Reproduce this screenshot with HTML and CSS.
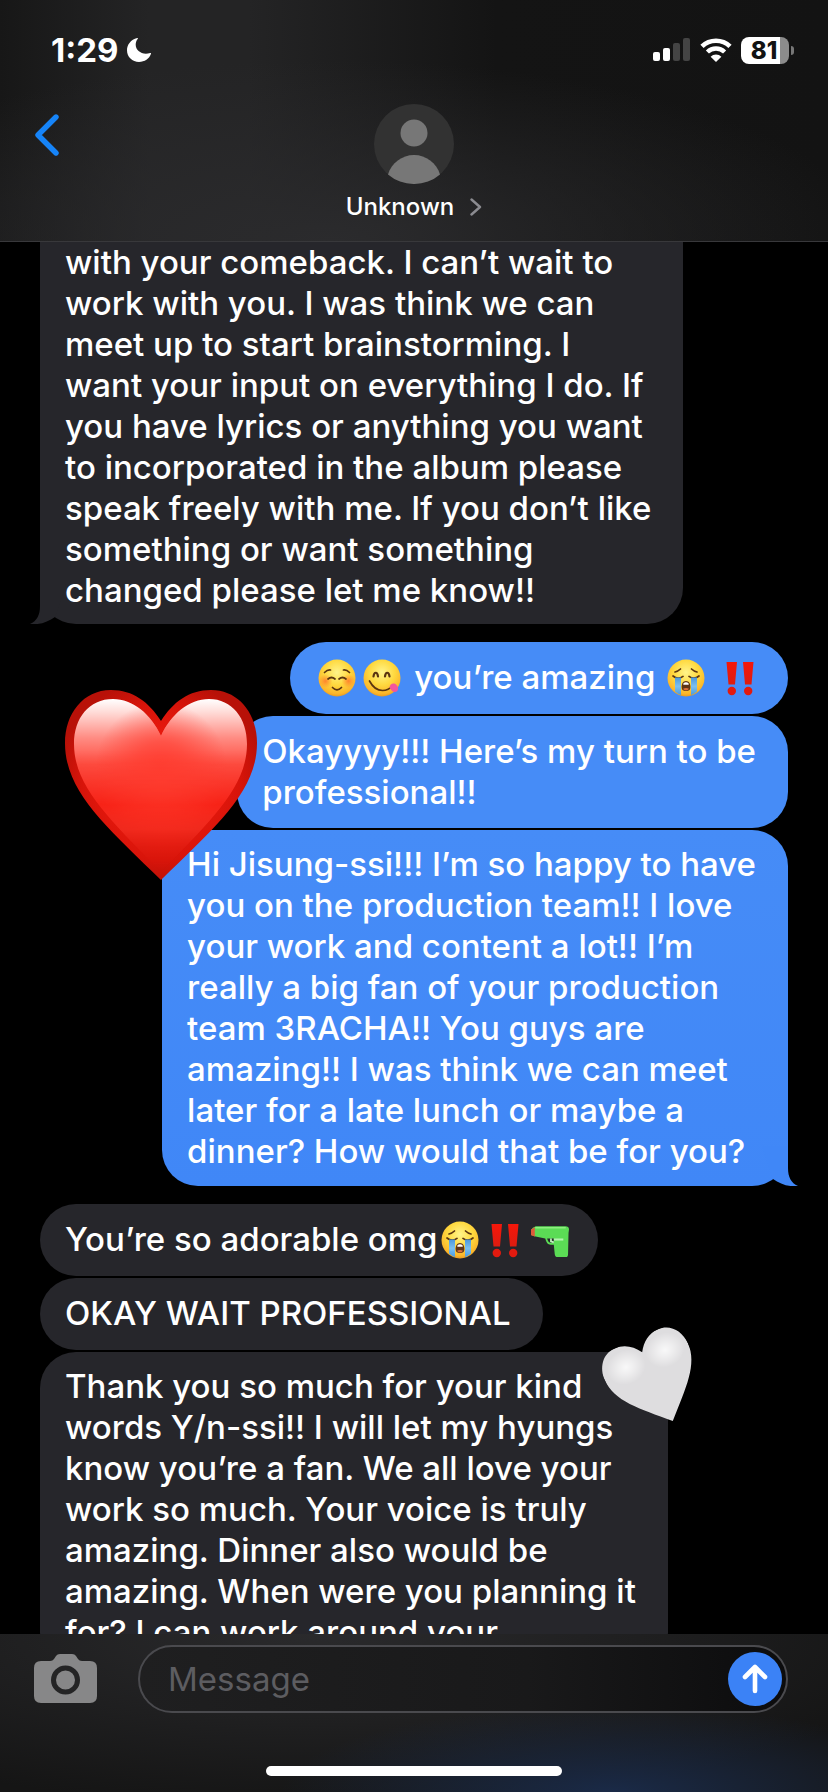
FILE: index.html
```html
<!DOCTYPE html>
<html lang="en">
<head>
<meta charset="utf-8">
<meta name="viewport" content="width=device-width, initial-scale=1">
<title>Messages</title>
<link rel="stylesheet" href="styles.css">
</head>
<body>
<svg class="defs" aria-hidden="true">
  <defs>
    <radialGradient id="face" cx=".5" cy=".35" r=".68">
      <stop offset="0" stop-color="#fff48a"/><stop offset=".5" stop-color="#ffd93f"/><stop offset=".85" stop-color="#fbb52a"/><stop offset="1" stop-color="#e0901c"/>
    </radialGradient>
    <radialGradient id="blush"><stop offset="0" stop-color="#ff6a2a" stop-opacity=".75"/><stop offset="1" stop-color="#ff7a2a" stop-opacity="0"/></radialGradient>
    <linearGradient id="tear" x1="0" y1="0" x2="0" y2="1"><stop offset="0" stop-color="#4a97dc"/><stop offset=".5" stop-color="#7cc0ee"/><stop offset="1" stop-color="#4a9be0"/></linearGradient>
    <linearGradient id="bang" x1="0" y1="0" x2="0" y2="1"><stop offset="0" stop-color="#f5170a"/><stop offset="1" stop-color="#dd1c10"/></linearGradient>
    <radialGradient id="red" cx="96" cy="92" r="104" gradientUnits="userSpaceOnUse">
      <stop offset="0" stop-color="#f5200f"/><stop offset=".45" stop-color="#e8190d"/><stop offset=".75" stop-color="#d8140a"/><stop offset="1" stop-color="#b81108"/>
    </radialGradient>
    <linearGradient id="gloss" x1="0" y1="9" x2="0" y2="172" gradientUnits="userSpaceOnUse">
      <stop offset="0" stop-color="#fff"/><stop offset=".08" stop-color="#ffdcd8"/><stop offset=".24" stop-color="#ff8b82"/><stop offset=".4" stop-color="#ff4f43"/><stop offset=".65" stop-color="#ff281c"/><stop offset=".8" stop-color="#ff3d30"/><stop offset="1" stop-color="#e01c10"/>
    </linearGradient>
    <radialGradient id="warm" cx="96" cy="78" r="66" gradientUnits="userSpaceOnUse">
      <stop offset="0" stop-color="#ff4034"/><stop offset=".4" stop-color="#ff4034" stop-opacity=".7"/><stop offset="1" stop-color="#ff4034" stop-opacity="0"/>
    </radialGradient>
    <linearGradient id="glossfade" x1="0" y1="60" x2="0" y2="182" gradientUnits="userSpaceOnUse">
      <stop offset="0" stop-color="#fff"/><stop offset=".5" stop-color="#fff" stop-opacity=".7"/><stop offset="1" stop-color="#fff" stop-opacity="0"/>
    </linearGradient>
    <mask id="glossmask"><rect width="192" height="190" fill="url(#glossfade)"/></mask>
    <radialGradient id="shine"><stop offset="0" stop-color="#fff" stop-opacity=".8"/><stop offset=".4" stop-color="#fff" stop-opacity=".5"/><stop offset="1" stop-color="#fff" stop-opacity="0"/></radialGradient>
    <symbol id="sob" viewBox="0 0 38 38">
      <circle cx="19" cy="19" r="18.500" fill="url(#face)"/>
      <path d="M6 17c3 2.600 7 2.600 10 .4M32 17c-3 2.600-7 2.600-10 .4M8 13c2-.4 4-1.600 5.500-3M30 13c-2-.4-4-1.600-5.500-3" fill="none" stroke="#5b3510" stroke-width="1.700" stroke-linecap="round"/>
      <path d="M8 18.500h6V36Q10.500 34.800 8 32.500ZM24 18.500h6v14Q27.500 34.800 24 36Z" fill="url(#tear)"/>
      <path d="M19 22c3 0 4.400 2.800 4.400 6s-1.800 4-4.400 4-4.400-.8-4.400-4 1.400-6 4.400-6Z" fill="#603516"/>
      <path d="M16.300 24.600q2.700-2.600 5.400 0v1.200h-5.400Z" fill="#fff"/>
      <path d="M16 29.800q3-1.800 6 0-1 1.600-3 1.600t-3-1.600Z" fill="#e0703a"/>
    </symbol>
    <symbol id="bangs" viewBox="0 0 38 38">
      <path d="M5.500 3h10.500l-2 22.500h-6.500ZM22 3h10.500l-2 22.500H24Z" fill="url(#bang)"/>
      <circle cx="10.800" cy="32" r="4.200" fill="#e21a0f"/><circle cx="27.200" cy="32" r="4.200" fill="#e21a0f"/>
    </symbol>
  </defs>
</svg>

<div class="phone">
  <header class="top">
    <div class="status">
      <div class="clock">
        <time>1:29</time>
        <svg width="24" height="24" viewBox="0 0 24 24" role="img" aria-label="Do not disturb"><path d="M10.200 0C3.800 1.600 0 6.700 0 12.300 0 19 5.300 24 12 24c5.600 0 10.300-3.200 12-8.200.2-.6-.3-1-.9-.8C15.200 17.500 8.500 12.500 8.700 6.500c0-2.200.8-4.200 2-5.500.5-.6.1-1.100-.5-1Z" fill="#fff"/></svg>
      </div>
      <div class="indicators">
        <svg width="38" height="24" viewBox="0 0 38 24" role="img" aria-label="Signal, two bars of four">
          <rect y="14" width="7" height="9" rx="2" fill="#fff"/><rect x="10" y="10" width="7" height="13" rx="2" fill="#fff"/><rect x="20" y="5" width="7" height="18" rx="2" fill="#444"/><rect x="30" width="7" height="23" rx="2" fill="#444"/>
        </svg>
        <svg width="32" height="24" viewBox="0 0 32 24" role="img" aria-label="Wi-Fi">
          <path d="M2 8.400a20 20 0 0 1 28 0" fill="none" stroke="#fff" stroke-width="4.600"/>
          <path d="M7.400 14a12.300 12.300 0 0 1 17.200 0" fill="none" stroke="#fff" stroke-width="4.400"/>
          <path d="M16 24l-5.400-5.200a7.600 7.600 0 0 1 10.800 0Z" fill="#fff"/>
        </svg>
        <div class="battery"><span class="battery-cell">81</span><span class="battery-nub"></span></div>
      </div>
    </div>
    <nav class="nav">
      <button class="back" type="button" aria-label="Back">
        <svg width="26" height="42" viewBox="0 0 26 42"><path d="M22 3 4 21l18 18" fill="none" stroke="#1684f8" stroke-width="5.400" stroke-linecap="round" stroke-linejoin="round"/></svg>
      </button>
      <button class="contact" type="button">
        <svg class="avatar" width="80" height="80" viewBox="0 0 80 80" aria-hidden="true">
          <circle cx="40" cy="40" r="40" fill="#323232"/><circle cx="40" cy="29" r="13.500" fill="#777"/>
          <path d="M14 70.400C17.500 59 28 51 40 51s22.500 8 26 19.400A40 40 0 0 1 14 70.400Z" fill="#777"/>
        </svg>
        <span class="name">Unknown<svg width="12" height="18" viewBox="0 0 12 18" aria-hidden="true"><path d="M1.500 1.500 10 9l-8.500 7.500" fill="none" stroke="#8b8b90" stroke-width="2.400" stroke-linecap="round" stroke-linejoin="round"/></svg></span>
      </button>
    </nav>
  </header>

  <main class="chat">
    <section class="group received">
      <p class="bubble continued">with your comeback. I can’t wait to<br>work with you. I was think we can<br>meet up to start brainstorming. I<br>want your input on everything I do. If<br>you have lyrics or anything you want<br>to incorporated in the album please<br>speak freely with me. If you don’t like<br>something or want something<br>changed please let me know!!
        <svg class="tail" width="36" height="40" viewBox="0 0 36 40" aria-hidden="true"><path d="M10 0v22c0 9-3 15-10 18 10 1 18-2 25-7L36 0Z" fill="#26262b"/></svg></p>
    </section>
    <section class="group sent">
      <p class="bubble emoji-end"><span class="emoji"><svg viewBox="0 0 38 38" role="img" aria-label="Smiling face"><circle cx="19" cy="19" r="18.500" fill="url(#face)"/><circle cx="7.500" cy="22" r="7" fill="url(#blush)"/><circle cx="30.500" cy="22" r="7" fill="url(#blush)"/><path d="M10 20q3.500-3 7 0M21 20q3.500-3 7 0M14.500 28.500q4.500 4.500 9 0M6.500 13.500q3-3 6-2.500M31.500 13.500q-3-3-6-2.500" fill="none" stroke="#5b3510" stroke-width="1.700" stroke-linecap="round"/></svg></span><span class="emoji"><svg viewBox="0 0 38 38" role="img" aria-label="Face savouring food"><circle cx="19" cy="19" r="18.500" fill="url(#face)"/><path d="M10.500 17.500c.5-5 4-5 4.500 0M22 17.500c.5-5 4-5 4.500 0" fill="none" stroke="#5b3510" stroke-width="2.200" stroke-linecap="round"/><path d="M6.500 22q5 9.500 13 9.500 6 0 10.500-5" fill="none" stroke="#5b3510" stroke-width="1.700" stroke-linecap="round"/><path d="M26.500 28.500c.5-3.500 4-5.500 7-2.500 3 3 1.500 7-1.500 7-2.500 0-4-2-5.500-4.500Z" fill="#f3569c"/></svg></span> you’re amazing <span class="emoji"><svg role="img" aria-label="Loudly crying face"><use href="#sob"/></svg></span> <span class="emoji"><svg role="img" aria-label="Double exclamation mark"><use href="#bangs"/></svg></span></p>
      <p class="bubble">Okayyyy!!! Here’s my turn to be<br>professional!!
        <svg class="heart-red" width="192" height="190" viewBox="0 0 192 190" role="img" aria-label="Red heart">
          <path d="M96 31C84 12 68 0 46 0 18 0 0 24 0 53c0 49 42 84 96 137 54-53 96-88 96-137C192 24 174 0 146 0c-22 0-38 12-50 31Z" fill="url(#red)"/>
          <g mask="url(#glossmask)">
            <path d="M96 46C86 24 68 9 48 9 24 9 9 28 9 54c0 44 39 78 87 128 48-50 86-84 86-128 0-26-15-45-38-45-20 0-38 15-48 37Z" fill="url(#gloss)"/>
            <path d="M96 46C86 24 68 9 48 9 24 9 9 28 9 54c0 44 39 78 87 128 48-50 86-84 86-128 0-26-15-45-38-45-20 0-38 15-48 37Z" fill="url(#warm)"/>
          </g>
        </svg></p>
      <p class="bubble long">Hi Jisung-ssi!!! I’m so happy to have<br>you on the production team!! I love<br>your work and content a lot!! I’m<br>really a big fan of your production<br>team 3RACHA!! You guys are<br>amazing!! I was think we can meet<br>later for a late lunch or maybe a<br>dinner? How would that be for you?
        <svg class="tail" width="36" height="40" viewBox="0 0 36 40" aria-hidden="true"><path d="M10 0v22c0 9-3 15-10 18 10 1 18-2 25-7L36 0Z" fill="#4087f7"/></svg></p>
    </section>
    <section class="group received">
      <p class="bubble emoji-end">You’re so adorable omg<span class="emoji"><svg role="img" aria-label="Loudly crying face"><use href="#sob"/></svg></span><span class="emoji"><svg role="img" aria-label="Double exclamation mark"><use href="#bangs"/></svg></span><span class="emoji"><svg viewBox="0 0 40 38" role="img" aria-label="Water pistol"><path d="M0 8.500 2 6l3-1.500h31q4 0 4 3.500l-.5 3.500L39 34q0 3-2.500 3H28q-2.500 0-3-3l-1-10h-3.500q-4 0-5.500-6.500L3.500 15 0 13.500Z" fill="#5bdc55"/><path d="M0 8 4 5.500v9.800L0 14Z" fill="#dd5c3a"/><path d="M5 6h31" stroke="#8df07f" stroke-width="1.600" stroke-linecap="round"/><path d="M17 17.500q1 4.500 4 4.500h3v-4.500Z" fill="#26262b"/><path d="M21 17.500v3l3 1" fill="none" stroke="#c4f5c0" stroke-width="1.800"/><path d="M24 18.500h10" stroke="#b4f3ae" stroke-width="2.200"/></svg></span></p>
      <p class="bubble">OKAY WAIT PROFESSIONAL</p>
      <p class="bubble long">Thank you so much for your kind<br>words Y/n-ssi!! I will let my hyungs<br>know you’re a fan. We all love your<br>work so much. Your voice is truly<br>amazing. Dinner also would be<br>amazing. When were you planning it<br>for? I can work around your
        <svg class="heart-white" width="91" height="90" viewBox="0 0 192 190" role="img" aria-label="White heart">
          <path d="M96 31C84 12 68 0 46 0 18 0 0 24 0 53c0 49 42 84 96 137 54-53 96-88 96-137C192 24 174 0 146 0c-22 0-38 12-50 31Z" fill="#dedddf"/>
          <ellipse cx="52" cy="46" rx="42" ry="36" fill="url(#shine)"/><ellipse cx="142" cy="46" rx="42" ry="36" fill="url(#shine)"/>
        </svg></p>
    </section>
  </main>

  <footer class="bottom">
    <form class="composer">
      <button class="camera" type="button" aria-label="Camera">
        <svg width="63" height="50" viewBox="0 0 63 50"><path d="M7 7h9c2 0 3-.7 4-2l2-3c1-1.300 2-2 4-2h12c2 0 3 .7 4 2l2 3c1 1.300 2 2 4 2h8q7 0 7 7v28q0 7-7 7H7q-7 0-7-7V14q0-7 7-7Z" fill="#878788"/><circle cx="31.500" cy="26" r="12" fill="#878788" stroke="#242425" stroke-width="5"/></svg>
      </button>
      <div class="field">
        <input type="text" placeholder="Message" aria-label="Message">
        <button class="send" type="button" aria-label="Send">
          <svg width="26" height="30" viewBox="0 0 26 30"><path d="M13 27V4M3 13 13 3l10 10" fill="none" stroke="#fff" stroke-width="4.600" stroke-linecap="round" stroke-linejoin="round"/></svg>
        </button>
      </div>
    </form>
    <div class="home-bar"></div>
  </footer>
</div>
</body>
</html>
```
FILE: styles.css
```css
* { box-sizing: border-box; }

body {
  margin: 0;
  background: #000;
  color: #fff;
  font-family: Inter, "Liberation Sans", sans-serif;
}

button {
  margin: 0;
  padding: 0;
  border: 0;
  background: none;
  color: inherit;
  font: inherit;
}

svg { display: block; }

.defs {
  position: absolute;
  width: 0;
  height: 0;
}

.phone {
  display: flex;
  flex-direction: column;
  height: 100vh;
}

/* Top bar */
.top {
  flex: none;
  border-bottom: 1px solid #38383b;
  background:
    radial-gradient(ellipse 65% 75% at 40% 100%, #2b2b2d 0%, rgba(43, 43, 45, 0) 100%),
    linear-gradient(90deg, #171717 0%, #242425 18%, #242425 30%, #141414 60%, #131313 100%);
}

.status {
  display: flex;
  align-items: center;
  justify-content: space-between;
  height: 100px;
  padding: 0 34px 0 51px;
}

.clock,
.indicators {
  display: flex;
  align-items: center;
}

.clock {
  gap: 9px;
  font-size: 33px;
  font-weight: 700;
}

.indicators { gap: 9px; }

.battery {
  display: flex;
  align-items: center;
  gap: 2px;
}

.battery-cell {
  width: 48px;
  height: 27px;
  padding-right: 2px;
  border-radius: 8px;
  background: linear-gradient(90deg, #fff 0 81%, #8c8c8c 81%);
  color: #131313;
  font-size: 24px;
  font-weight: 800;
  line-height: 27px;
  text-align: center;
}

.battery-nub {
  width: 3px;
  height: 9px;
  border-radius: 0 3px 3px 0;
  background: #777;
}

.nav {
  display: grid;
  grid-template-columns: 1fr auto 1fr;
  align-items: start;
  padding: 4px 34px 19px;
}

.back {
  justify-self: start;
  padding-top: 10px;
}

.contact {
  display: grid;
  justify-items: center;
  gap: 8px;
}

.name {
  display: flex;
  align-items: center;
  gap: 16px;
  font-size: 24px;
  font-weight: 500;
  line-height: 30px;
}

/* Conversation */
.chat {
  flex: 1;
  display: flex;
  flex-direction: column;
  gap: 18px;
  min-height: 0;
  overflow: hidden;
  padding: 0 40px;
}

.group {
  flex: none;
  display: flex;
  flex-direction: column;
  align-items: flex-start;
  gap: 2px;
}

.sent { align-items: flex-end; }

.bubble {
  position: relative;
  min-height: 72px;
  margin: 0;
  padding: 15px 32px 15px 25px;
  border-radius: 36px;
  background: #26262b;
  font-size: 33px;
  font-weight: 500;
  line-height: 41px;
  white-space: nowrap;
}

.sent .bubble {
  background: #468cf7;
}

.sent .long {
  background: linear-gradient(#468cf7, #4087f7);
}

.long {
  padding-top: 14px;
  padding-bottom: 14px;
}

.continued {
  padding-top: 0;
  padding-bottom: 13px;
  border-radius: 0 0 36px 36px;
}

.emoji-end { padding-right: 25px; }

.emoji {
  display: inline-block;
  width: 45px;
  height: 38px;
  padding: 0 3px;
  vertical-align: -8px;
}

.emoji svg {
  width: 38px;
  height: 38px;
}

.tail {
  position: absolute;
  bottom: 0;
  left: -10px;
}

.sent .tail {
  right: -10px;
  left: auto;
  transform: scaleX(-1);
}

.heart-red {
  position: absolute;
  z-index: 1;
  top: -26px;
  left: -172px;
}

.heart-white {
  position: absolute;
  top: -17px;
  right: -32px;
  transform: rotate(-24deg);
}

/* Composer */
.bottom {
  flex: none;
  padding: 11px 0 16px;
  background:
    radial-gradient(ellipse 40% 55% at 74% 100%, #1a2a47 0%, rgba(26, 42, 71, 0) 100%),
    radial-gradient(ellipse 75% 110% at 38% 0%, #2a2a2c 0%, rgba(42, 42, 44, 0) 100%),
    #151515;
}

.composer {
  display: flex;
  align-items: center;
  gap: 41px;
  padding: 0 40px 0 34px;
}

.field {
  flex: 1;
  display: flex;
  align-items: center;
  height: 68px;
  padding: 0 4px 0 28px;
  border: 2px solid #4a4a4e;
  border-radius: 34px;
  background: linear-gradient(90deg, #1f1f20 0%, #19191a 60%, #0c0c0d 100%);
}

.field input {
  flex: 1;
  min-width: 0;
  height: 48px;
  padding: 0;
  border: 0;
  outline: 0;
  background: none;
  color: #fff;
  font: inherit;
  font-size: 33px;
}

.field input::placeholder {
  color: #5d5d61;
  opacity: 1;
}

.send {
  display: grid;
  place-items: center;
  width: 54px;
  height: 54px;
  border-radius: 50%;
  background: #3b82f6;
}

.home-bar {
  width: 296px;
  height: 10px;
  margin: 53px auto 0;
  border-radius: 5px;
  background: #fff;
}
```
